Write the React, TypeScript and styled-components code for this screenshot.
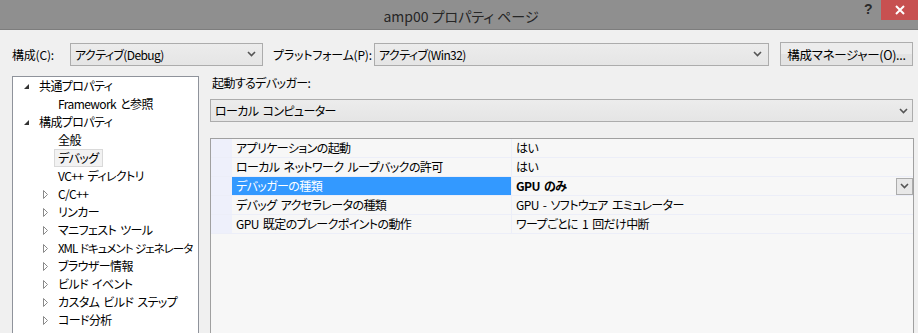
import React from "react"
import styled, { createGlobalStyle } from "styled-components"

const GlobalStyle = createGlobalStyle`
    html, body {
        margin: 0;
        padding: 0;
        width: 918px;
        height: 333px;
        overflow: hidden;
        background: #f0f0f0;
    }
    body {
        font-family: "Noto Sans CJK JP", "Noto Sans", sans-serif;
        font-size: 12px;
        font-feature-settings: "palt";
        letter-spacing: -0.6px;
        word-spacing: 2px;
        color: #000;
    }
`

type TreeNode = {
    label: string
    level: number
    arrow?: "open" | "closed"
    selected?: boolean
    condensed?: boolean
}

const treeItems: TreeNode[] = [
    { label: "共通プロパティ", level: 0, arrow: "open" },
    { label: "Framework と参照", level: 1 },
    { label: "構成プロパティ", level: 0, arrow: "open" },
    { label: "全般", level: 1 },
    { label: "デバッグ", level: 1, selected: true },
    { label: "VC++ ディレクトリ", level: 1 },
    { label: "C/C++", level: 1, arrow: "closed" },
    { label: "リンカー", level: 1, arrow: "closed" },
    { label: "マニフェスト ツール", level: 1, arrow: "closed" },
    { label: "XML ドキュメント ジェネレータ", level: 1, arrow: "closed", condensed: true },
    { label: "ブラウザー情報", level: 1, arrow: "closed" },
    { label: "ビルド イベント", level: 1, arrow: "closed" },
    { label: "カスタム ビルド ステップ", level: 1, arrow: "closed" },
    { label: "コード分析", level: 1, arrow: "closed" }
]

const gridRows = [
    { name: "アプリケーションの起動", value: "はい" },
    { name: "ローカル ネットワーク ループバックの許可", value: "はい" },
    { name: "デバッガーの種類", value: "GPU のみ", selected: true },
    { name: "デバッグ アクセラレータの種類", value: "GPU - ソフトウェア エミュレーター" },
    { name: "GPU 既定のブレークポイントの動作", value: "ワープごとに 1 回だけ中断" }
]

const Chevron = () => (
    <svg width="9" height="6" viewBox="0 0 9 6">
        <path d="M1 1 L4.5 4.5 L8 1" stroke="#555" strokeWidth="1.6" fill="none" />
    </svg>
)

const App = () => {
    return (
        <Window>
            <GlobalStyle />
            <TitleBar>
                <Title>amp00 プロパティ ページ</Title>
                <HelpButton>?</HelpButton>
                <CloseButton>
                    <svg width="10" height="10" viewBox="0 0 10 10">
                        <path d="M1 1 L9 9 M9 1 L1 9" stroke="#fff" strokeWidth="2" />
                    </svg>
                </CloseButton>
            </TitleBar>
            <Body>
                <Toolbar>
                    <Label width={58}>構成(C):</Label>
                    <Select width={193}>
                        <span>アクティブ(Debug)</span>
                        <Chevron />
                    </Select>
                    <Label width={101} indent={10}>プラットフォーム(P):</Label>
                    <Select width={395}>
                        <span>アクティブ(Win32)</span>
                        <Chevron />
                    </Select>
                    <Button>構成マネージャー(O)...</Button>
                </Toolbar>
                <Main>
                    <Tree>
                        {treeItems.map(item => (
                            <TreeRow key={item.label} level={item.level}>
                                <Expander>
                                    {item.arrow == "open" && (
                                        <svg width="7" height="7" viewBox="0 0 7 7">
                                            <path d="M6 1 L6 6 L1 6 Z" fill="#333" />
                                        </svg>
                                    )}
                                    {item.arrow == "closed" && (
                                        <svg width="7" height="9" viewBox="0 0 7 9">
                                            <path d="M1.5 0.5 L5.5 4.5 L1.5 8.5 Z" fill="none" stroke="#8a8a8a" />
                                        </svg>
                                    )}
                                </Expander>
                                <TreeLabel selected={item.selected} condensed={item.condensed}>
                                    {item.label}
                                </TreeLabel>
                            </TreeRow>
                        ))}
                    </Tree>
                    <Pane>
                        <PaneLabel>起動するデバッガー:</PaneLabel>
                        <WideSelect>
                            <span>ローカル コンピューター</span>
                            <Chevron />
                        </WideSelect>
                        <Grid>
                            {gridRows.map(row => (
                                <GridRow key={row.name}>
                                    <Gutter />
                                    <NameCell selected={row.selected}>{row.name}</NameCell>
                                    <ValueCell bold={row.selected}>
                                        <span>{row.value}</span>
                                        {row.selected && (
                                            <CellDrop>
                                                <Chevron />
                                            </CellDrop>
                                        )}
                                    </ValueCell>
                                </GridRow>
                            ))}
                        </Grid>
                    </Pane>
                </Main>
            </Body>
        </Window>
    )
}

export default App

const Window = styled.div`
    width: 918px;
    height: 333px;
    display: flex;
    flex-direction: column;
    overflow: hidden;
`

const TitleBar = styled.div`
    position: relative;
    height: 29px;
    background: #8f8f8f;
    border-bottom: 1px solid #7d7d7d;
    display: flex;
    align-items: center;
    justify-content: center;
`

const Title = styled.div`
    font-size: 14px;
    letter-spacing: 0;
    word-spacing: 0;
    color: #262626;
    margin-top: 2px;
    margin-left: 4px;
`

const HelpButton = styled.div`
    position: absolute;
    right: 46px;
    top: 1px;
    font-family: "Liberation Sans", sans-serif;
    font-weight: bold;
    font-size: 14px;
    color: #2a2a2a;
`

const CloseButton = styled.div`
    position: absolute;
    right: 0;
    top: 0;
    width: 37px;
    height: 20px;
    background: #c75050;
    display: flex;
    align-items: center;
    justify-content: center;
`

const Body = styled.div`
    flex: 1;
    display: flex;
    flex-direction: column;
    padding: 12px 5px 0 12px;
    min-height: 0;
`

const Toolbar = styled.div`
    display: flex;
    align-items: center;
    height: 24px;
`

const Label = styled.div<{ width: number; indent?: number }>`
    width: ${p => p.width}px;
    flex-shrink: 0;
    margin-left: ${p => p.indent || 0}px;
    white-space: nowrap;
    letter-spacing: -0.2px;
`

const Select = styled.div<{ width: number }>`
    box-sizing: border-box;
    width: ${p => p.width}px;
    flex-shrink: 0;
    height: 23px;
    border: 1px solid #acacac;
    background: linear-gradient(#ececec, #e5e5e5);
    display: flex;
    align-items: center;
    justify-content: space-between;
    padding: 0 6px 0 4px;
    white-space: nowrap;
`

const Button = styled.div`
    box-sizing: border-box;
    margin-left: 11px;
    width: 134px;
    height: 24px;
    border: 1px solid #adadad;
    background: linear-gradient(#ececec 50%, #e3e3e3 50%);
    display: flex;
    align-items: center;
    justify-content: center;
    white-space: nowrap;
    font-size: 12.5px;
    letter-spacing: -0.3px;
`

const Main = styled.div`
    flex: 1;
    display: flex;
    margin-top: 10px;
    min-height: 0;
`

const Tree = styled.div`
    box-sizing: border-box;
    width: 187px;
    flex-shrink: 0;
    background: #fff;
    border: 1px solid #8f939b;
    border-bottom: none;
    height: 280px;
    overflow: hidden;
`

const TreeRow = styled.div<{ level: number }>`
    height: 18px;
    display: flex;
    align-items: center;
    padding-left: ${p => (p.level == 0 ? 9 : 28)}px;
    white-space: nowrap;
`

const Expander = styled.div`
    width: 16px;
    flex-shrink: 0;
    display: flex;
    align-items: center;
    justify-content: flex-start;
    padding-left: 1px;
    box-sizing: border-box;
`

const TreeLabel = styled.div<{ selected?: boolean; condensed?: boolean }>`
    height: 16px;
    line-height: 16px;
    padding: 0 3px;
    margin-left: -3px;
    font-size: ${p => (p.condensed ? 11.5 : 12)}px;
    letter-spacing: ${p => (p.condensed ? -1 : -0.6)}px;
    word-spacing: ${p => (p.condensed ? 1 : 2)}px;
    border: 1px solid ${p => (p.selected ? "#d9d9d9" : "transparent")};
    background: ${p => (p.selected ? "#f2f2f2" : "transparent")};
`

const Pane = styled.div`
    flex: 1;
    display: flex;
    flex-direction: column;
    margin-left: 11px;
    min-width: 0;
`

const PaneLabel = styled.div`
    height: 14px;
    line-height: 14px;
    padding-left: 2px;
`

const WideSelect = styled(Select)`
    width: 703px;
    margin-top: 9px;
    padding: 0 4px 0 4px;
`

const Grid = styled.div`
    box-sizing: border-box;
    width: 704px;
    margin-top: 16px;
    flex: 1;
    background: #f7f7f7;
    border: 1px solid #a0a0a0;
    border-bottom: none;
`

const GridRow = styled.div`
    display: flex;
    height: 18px;
    border-bottom: 1px solid #eceef8;
    line-height: 18px;
    white-space: nowrap;
`

const Gutter = styled.div`
    width: 21px;
    background: #eef0fb;
`

const NameCell = styled.div<{ selected?: boolean }>`
    box-sizing: border-box;
    width: 280px;
    padding-left: 4px;
    border-right: 1px solid #eceef8;
    background: ${p => (p.selected ? "#3399ff" : "transparent")};
    color: ${p => (p.selected ? "#fff" : "#000")};
`

const ValueCell = styled.div<{ bold?: boolean }>`
    flex: 1;
    display: flex;
    justify-content: space-between;
    align-items: center;
    padding-left: 4px;
    font-weight: ${p => (p.bold ? "bold" : "normal")};
`

const CellDrop = styled.div`
    box-sizing: border-box;
    width: 17px;
    height: 17px;
    border: 1px solid #acacac;
    background: #e8e8e8;
    display: flex;
    align-items: center;
    justify-content: center;
`
